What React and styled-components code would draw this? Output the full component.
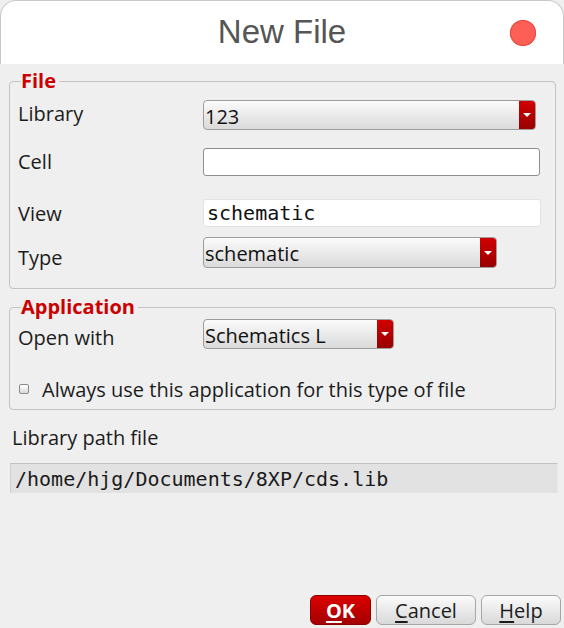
import styled, { createGlobalStyle } from "styled-components";

const GlobalStyle = createGlobalStyle`
	html, body {
		margin: 0;
		padding: 0;
		background: #ffffff;
	}
	#root {
		width: 564px;
		height: 628px;
	}
`;

const Dialog = styled.div`
	width: 564px;
	height: 628px;
	display: flex;
	flex-direction: column;
	background: #efefef;
	font-family: "Open Sans", "Noto Sans", sans-serif;
	font-size: 20px;
	color: #1c1c1c;
	overflow: hidden;
	box-sizing: border-box;
`;

const TitleBar = styled.div`
	height: 64px;
	flex: none;
	position: relative;
	display: flex;
	align-items: center;
	justify-content: center;
	background: #ffffff;
	border: 1px solid #c9c9c9;
	border-bottom: none;
	border-radius: 16px 16px 0 0;
	box-sizing: border-box;
`;

const Title = styled.div`
	font-family: "Liberation Sans", Arial, sans-serif;
	font-size: 33px;
	color: #555555;
	margin-top: -2px;
`;

const CloseDot = styled.div`
	position: absolute;
	right: 27px;
	top: 19px;
	width: 26px;
	height: 26px;
	border-radius: 50%;
	background: #fd5f56;
	box-shadow: inset 0 0 0 1px #e8493f;
`;

const Body = styled.div`
	flex: 1;
	display: flex;
	flex-direction: column;
	padding: 0 6px 3px 9px;
`;

const Group = styled.fieldset`
	margin: ${(p) => p.$top}px 2px 0 0;
	padding: ${(p) => p.$padTop}px 8px ${(p) => p.$padBottom}px 8px;
	border: 1px solid #c3c3c3;
	border-radius: 4px;
	min-width: 0;
`;

const Legend = styled.legend`
	margin-left: 3px;
	padding: 0 3px 0 0;
	font-weight: bold;
	font-size: 20px;
	line-height: 22px;
	color: #cc0000;
`;

const Row = styled.div`
	display: flex;
	align-items: center;
	height: ${(p) => p.$h}px;
	margin-top: ${(p) => p.$top || 0}px;
`;

const Label = styled.div`
	width: 185px;
	flex: none;
	line-height: 22px;
	margin-top: ${(p) => p.$shift || 0}px;
`;

const Combo = styled.div`
	width: ${(p) => p.$w}px;
	height: 100%;
	display: flex;
	box-sizing: border-box;
	border: 1px solid #9d9d9d;
	border-radius: 4px;
	background: linear-gradient(#fbfbfb, #dadada);
	overflow: hidden;
`;

const ComboText = styled.div`
	flex: 1;
	display: flex;
	align-items: center;
	padding-left: 1px;
	padding-top: 2px;
	color: #111111;
`;

const ComboArrow = styled.div`
	width: 16px;
	flex: none;
	display: flex;
	align-items: center;
	justify-content: center;
	background: linear-gradient(#d20000, #980000);
	&::after {
		content: "";
		border-left: 4px solid transparent;
		border-right: 4px solid transparent;
		border-top: 4px solid #ffffff;
	}
`;

const TextInput = styled.div`
	width: ${(p) => p.$w}px;
	height: 100%;
	box-sizing: border-box;
	display: flex;
	align-items: center;
	padding-left: 3px;
	background: #ffffff;
	border: 1px solid ${(p) => (p.$faint ? "#e2e2e2" : "#8e8e8e")};
	border-radius: 3px;
	font-family: "DejaVu Sans Mono", "Liberation Mono", monospace;
	font-size: 20px;
	color: #111111;
`;

const CheckRow = styled.div`
	display: flex;
	align-items: center;
	gap: 13px;
	margin-top: 29px;
	height: 22px;
	padding-left: 1px;
`;

const CheckBox = styled.div`
	width: 10px;
	height: 10px;
	box-sizing: border-box;
	border: 1px solid #8a8a8a;
	border-radius: 2px;
	background: linear-gradient(#ffffff, #d8d8d8);
`;

const PathLabel = styled.div`
	margin: 17px 0 0 3px;
	line-height: 22px;
`;

const PathField = styled.div`
	margin: 14px 0 0 1px;
	height: 29px;
	display: flex;
	align-items: center;
	padding-left: 4px;
	background: #e2e2e2;
	border-top: 1px solid #c2c2c2;
	border-left: 1px solid #cfcfcf;
	border-right: 1px solid #e8e8e8;
	font-family: "DejaVu Sans Mono", "Liberation Mono", monospace;
	font-size: 20px;
	color: #1a1a1a;
`;

const Buttons = styled.div`
	margin-top: auto;
	display: flex;
	justify-content: flex-end;
	gap: 5px;
	margin-right: -3px;
`;

const Button = styled.button`
	width: ${(p) => p.$w}px;
	height: 30px;
	padding: 0;
	font-family: "Open Sans", "Noto Sans", sans-serif;
	font-size: 20px;
	font-weight: ${(p) => (p.$primary ? "bold" : "normal")};
	color: ${(p) => (p.$primary ? "#ffffff" : "#1c1c1c")};
	border: 1px solid ${(p) => (p.$primary ? "#8c0000" : "#a6a6a6")};
	border-radius: 6px;
	background: ${(p) =>
		p.$primary
			? "linear-gradient(#dc0000, #a30000)"
			: "linear-gradient(#fbfbfb, #d9d9d9)"};
	u {
		text-underline-offset: 3px;
	}
`;

export default function App() {
	return (
		<>
			<GlobalStyle />
			<Dialog>
				<TitleBar>
					<Title>New File</Title>
					<CloseDot />
				</TitleBar>
				<Body>
					<Group $top={6} $padTop={8} $padBottom={20}>
						<Legend>File</Legend>
						<Row $h={30}>
							<Label $shift={-3}>Library</Label>
							<Combo $w={333}>
								<ComboText>123</ComboText>
								<ComboArrow />
							</Combo>
						</Row>
						<Row $h={28} $top={18}>
							<Label>Cell</Label>
							<TextInput $w={337} />
						</Row>
						<Row $h={28} $top={23}>
							<Label $shift={2}>View</Label>
							<TextInput $w={338} $faint>
								schematic
							</TextInput>
						</Row>
						<Row $h={31} $top={10}>
							<Label $shift={10}>Type</Label>
							<Combo $w={294}>
								<ComboText>schematic</ComboText>
								<ComboArrow />
							</Combo>
						</Row>
					</Group>
					<Group $top={7} $padTop={1} $padBottom={9}>
						<Legend>Application</Legend>
						<Row $h={30}>
							<Label $shift={8}>Open with</Label>
							<Combo $w={191}>
								<ComboText>Schematics L</ComboText>
								<ComboArrow />
							</Combo>
						</Row>
						<CheckRow>
							<CheckBox />
							<span>Always use this application for this type of file</span>
						</CheckRow>
					</Group>
					<PathLabel>Library path file</PathLabel>
					<PathField>/home/hjg/Documents/8XP/cds.lib</PathField>
					<Buttons>
						<Button $primary $w={61}>
							<u>O</u>K
						</Button>
						<Button $w={100}>
							<u>C</u>ancel
						</Button>
						<Button $w={80}>
							<u>H</u>elp
						</Button>
					</Buttons>
				</Body>
			</Dialog>
		</>
	);
}
